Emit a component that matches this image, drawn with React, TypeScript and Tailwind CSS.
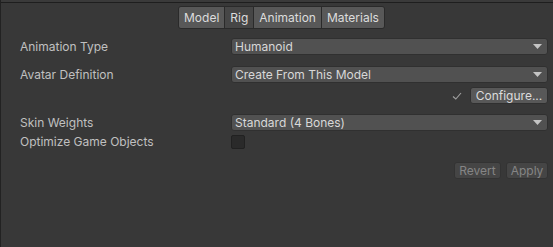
import React from "react";

const tabs = ["Model", "Rig", "Animation", "Materials"];

function Dropdown({ value }: { value: string }) {
  return (
    <div className="flex h-[17px] w-[317px] items-center justify-between rounded-[3px] border border-[#303030] bg-[#515151] pl-[3px] pr-[4px] text-[#d8d8d8]">
      <span className="leading-none">{value}</span>
      <svg width="9" height="5" viewBox="0 0 9 5" className="mr-[1px]">
        <path d="M0 0 H9 L4.5 5 Z" fill="#c4c4c4" />
      </svg>
    </div>
  );
}

function Row({ label, children, cls }: { label: string; children: React.ReactNode; cls: string }) {
  return (
    <div className={`flex items-center ${cls}`}>
      <div className="w-[211px] leading-none text-[#c0c0c0]">{label}</div>
      {children}
    </div>
  );
}

export default function App() {
  return (
    <div
      className="h-[247px] w-[553px] overflow-hidden border-l border-[#222] bg-[#383838] text-[12px] leading-none"
      style={{ fontFamily: "Inter, 'Liberation Sans', sans-serif" }}
    >
      <div className="h-[2px] bg-[#3a3a3a]" />
      <div className="h-[1px] bg-[#1e1e1e]" />
      <div className="flex pl-[177px] pt-[3px]">
        <div className="flex h-[23px] overflow-hidden rounded-[3px] border border-[#2a2a2a]">
          {tabs.map((t, i) => (
            <div
              key={t}
              className={`flex items-center px-[5px] ${i > 0 ? "border-l border-[#2a2a2a]" : ""} ${
                t === "Rig" ? "bg-[#464646] text-[#dcdcdc]" : "bg-[#585858] text-[#dcdcdc]"
              }`}
            >
              {t}
            </div>
          ))}
        </div>
      </div>

      <div className="pl-[19px] pr-[5px]">
        <Row label="Animation Type" cls="mt-[9px] h-[17px]">
          <Dropdown value="Humanoid" />
        </Row>
        <Row label="Avatar Definition" cls="mt-[11px] h-[17px]">
          <Dropdown value="Create From This Model" />
        </Row>
        <div className="mt-[4px] flex h-[17px] items-center justify-end">
          <svg width="10" height="8" viewBox="0 0 10 8" className="mr-[8px]">
            <path d="M1 4.5 L3.8 7 L9 1" stroke="#a0a0a0" strokeWidth="1.1" fill="none" />
          </svg>
          <div className="flex h-[17px] w-[78px] items-center justify-center rounded-[3px] border border-[#303030] bg-[#585858] text-[#dcdcdc]">
            Configure...
          </div>
        </div>
        <Row label="Skin Weights" cls="mt-[10px] h-[17px]">
          <Dropdown value="Standard (4 Bones)" />
        </Row>
        <Row label="Optimize Game Objects" cls="mt-[4px] h-[14px]">
          <div className="h-[14px] w-[14px] rounded-[2px] border border-[#212121] bg-[#2a2a2a]" />
        </Row>
        <div className="mt-[13px] flex h-[17px] justify-end gap-[5px]">
          <div className="flex h-[17px] w-[47px] items-center justify-center rounded-[3px] border border-[#333] bg-[#454545] text-[#858585]">
            Revert
          </div>
          <div className="flex h-[17px] w-[42px] items-center justify-center rounded-[3px] border border-[#333] bg-[#454545] text-[#858585]">
            Apply
          </div>
        </div>
      </div>
    </div>
  );
}
